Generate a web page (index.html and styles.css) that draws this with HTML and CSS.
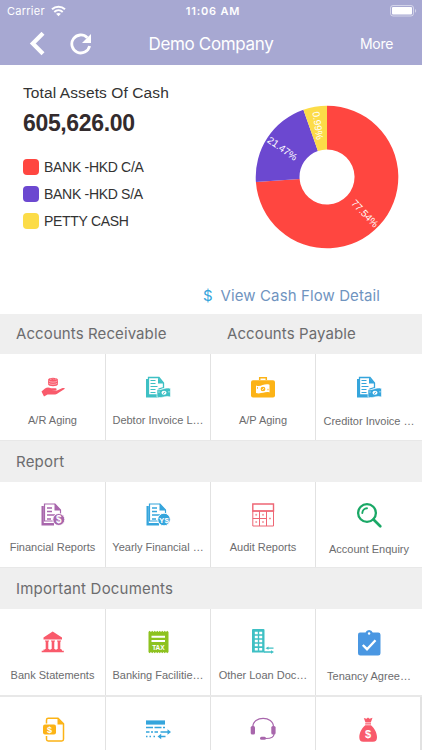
FILE: index.html
```html
<!DOCTYPE html>
<html lang="en">
  <head>
    <meta charset="UTF-8" />
    <meta name="viewport" content="width=device-width, initial-scale=1.0" />
    <title>Demo Company</title>
    <link rel="stylesheet" href="styles.css">
  </head>
  <body>
    <div class="header">
      <div class="status-bar">
        <div class="carrier">
          <span>Carrier</span>
          <svg width="15" height="12" viewBox="0 0 15 12" fill="none" stroke="#fff" stroke-width="2">
            <path d="M1 4.3c3.7-3.4 9.3-3.4 13 0M3.3 6.9c2.4-2.2 6-2.2 8.4 0" />
            <path d="M5.1 8.8c1.4-1.2 3.4-1.2 4.8 0L7.5 11.3z" fill="#fff" stroke="none" />
          </svg>
        </div>
        <span class="clock">11:06 AM</span>
        <svg class="battery" width="27" height="12" viewBox="0 0 27 12">
          <rect x=".5" y=".5" width="23" height="10.5" rx="2.5" fill="none" stroke="#fff" stroke-opacity=".5" />
          <rect x="2" y="2" width="20" height="7.5" rx="1" fill="#fff" />
          <path d="M25 4v3.8c1.6-.7 1.6-3.1 0-3.8z" fill="#fff" fill-opacity=".5" />
        </svg>
      </div>
      <div class="nav-bar">
        <div class="nav-left">
          <svg width="16" height="24" viewBox="0 0 16 24" fill="none" stroke="#fff" stroke-width="4.2">
            <path d="M14 1.300 3.800 11.500l10.200 10.200" />
          </svg>
          <svg width="22" height="22" viewBox="0 0 22 22">
            <path d="M17.3 4.7A9 9 0 1 0 19.6 13" fill="none" stroke="#fff" stroke-width="2.8" />
            <path d="M21 1v9h-9z" fill="#fff" />
          </svg>
        </div>
        <span class="nav-title">Demo Company</span>
        <span class="nav-more">More</span>
      </div>
    </div>

    <div class="summary">
      <div class="summary-top">
        <div class="assets">
          <div class="assets-title">Total Assets Of Cash</div>
          <div class="assets-total">605,626.00</div>
          <div class="legend"><span class="swatch red"></span>BANK -HKD C/A</div>
          <div class="legend"><span class="swatch purple"></span>BANK -HKD S/A</div>
          <div class="legend"><span class="swatch yellow"></span>PETTY CASH</div>
        </div>
        <svg class="chart" width="144" height="144" viewBox="255 105 144 144">
          <path d="M327 105.7A71.3 71.3 0 1 1 255.9 182L299.6 178.9A27.5 27.5 0 1 0 327 149.5z" fill="#ff4640" />
          <path d="M255.9 182A71.3 71.3 0 0 1 303.4 109.7L317.9 151A27.5 27.5 0 0 0 299.6 178.9z" fill="#6c48d0" />
          <path d="M303.4 109.7A71.3 71.3 0 0 1 327 105.7V149.5A27.5 27.5 0 0 0 317.9 151z" fill="#fcdc48" />
          <text class="chart-label" transform="translate(365 213.5) rotate(46)" y="3.5">77.54%</text>
          <text class="chart-label" transform="translate(282.5 148.5) rotate(35)" y="3.5">21.47%</text>
          <text class="chart-label" transform="translate(318 125.500) rotate(82)" y="3.5">0.99%</text>
        </svg>
      </div>
      <div class="cash-flow"><span class="dollar">$</span><span>View Cash Flow Detail</span></div>
    </div>

    <div class="section-title split"><span class="receivable">Accounts Receivable</span><span class="payable">Accounts Payable</span></div>
    <div class="tiles">
      <div class="tile">
        <svg viewBox="0 0 32 32" fill="#f95a6b">
          <path d="M11 9c0-3 10-3 10 0v4c0 3-10 3-10 0z" />
          <path d="M11.5 9.8c2 1.8 7 1.8 9 0M13 8.2h1.5M16 7.6l1 1M18 8h1.5M11.5 12.2c2 1.6 7 1.6 9 0" fill="none" stroke="#fff" stroke-width=".5" />
          <path d="M4.500 20.500 8 17.500c2-1.500 4-1.300 6-.3h4.500c1.500 0 1.500 2 0 2l-4 .3h5.500l5-2.300c1.500-.6 3.500-.2 2.500.7L20.500 22.500c-1 .8-2 1-3 1H10.500L7 25.500z" />
        </svg>
        <span>A/R Aging</span>
      </div>
      <div class="tile">
        <svg viewBox="0 0 32 32" fill="#3ec0c4">
          <path d="M6.500 6.500H17l4.500 5.500v4.500L17 18v6H6.500z" fill="#fff" stroke="#3ec0c4" stroke-width="1.300" />
          <path d="M16 6.500 22 12.500h-6zM4 8h2.500v16H17v2.500H4z" />
          <path d="M8.500 9.500h5M8.500 12.500h5M8.500 15.500h7M8.500 18.500h5M8.500 21.500h5" fill="none" stroke="#3ec0c4" stroke-width="1.200" />
          <path d="M15 18.500c4 1.500 8-3 13.500-1v8.500c-5-2-9 2-13.500 0z" stroke="#fff" stroke-width=".6" />
          <ellipse cx="22" cy="21.800" rx="2.500" ry="2" fill="#fff" />
          <path d="M17 20.300v1.500M27 20v1.500" stroke="#fff" stroke-width=".7" />
          <path d="m21.300 22.800 1.500-2" stroke="#3ec0c4" />
        </svg>
        <span>Debtor Invoice L…</span>
      </div>
      <div class="tile">
        <svg viewBox="0 0 32 32" fill="#fcb316">
          <path d="M12.700 9V6.800h6.600V9" fill="none" stroke="#fcb316" stroke-width="1.500" />
          <rect x="4" y="9.200" width="24" height="17.300" rx="2" />
          <path d="M9 14.500c5 2 8-2.500 13.500-.7v7.700c-4-1.500-8.500 2-13.500.500z" fill="#fff" />
          <ellipse cx="16" cy="18" rx="2.400" ry="2.200" />
          <path d="M10.500 16.200v1.500M21 17.800v1.500" stroke="#fcb316" />
          <path d="m15.300 19 1.500-2" stroke="#fff" stroke-width=".8" />
        </svg>
        <span>A/P Aging</span>
      </div>
      <div class="tile low">
        <svg viewBox="0 0 32 32" fill="#35a5dc">
          <path d="M6.500 6.500H17l4.500 5.500v4.500L17 18v6H6.500z" fill="#fff" stroke="#35a5dc" stroke-width="1.300" />
          <path d="M16 6.500 22 12.500h-6zM4 8h2.500v16H17v2.500H4z" />
          <path d="M8.500 9.500h5M8.500 12.500h5M8.500 15.500h7M8.500 18.500h5M8.500 21.500h5" fill="none" stroke="#35a5dc" stroke-width="1.200" />
          <path d="M15 18.500c4 1.500 8-3 13.500-1v8.500c-5-2-9 2-13.500 0z" stroke="#fff" stroke-width=".6" />
          <ellipse cx="22" cy="21.800" rx="2.500" ry="2" fill="#fff" />
          <path d="M17 20.300v1.500M27 20v1.500" stroke="#fff" stroke-width=".7" />
          <path d="m21.300 22.800 1.500-2" stroke="#35a5dc" />
        </svg>
        <span>Creditor Invoice …</span>
      </div>
    </div>

    <div class="section-title">Report</div>
    <div class="tiles">
      <div class="tile">
        <svg viewBox="0 0 32 32" fill="#a866ac">
          <path d="M7.500 5H18l5.500 6v11H7.500z" fill="#fff" stroke="#a866ac" stroke-width="1.200" />
          <path d="M17.500 4.500 24 11.500h-6.500zM4.500 7h2.300v17H17v2.500H4.500z" />
          <path d="M10 9h5M10 12.500h5M10 16h8M10 20h4" fill="none" stroke="#a866ac" stroke-width="1.300" />
          <circle cx="21.800" cy="20.500" r="6" stroke="#fff" stroke-width=".9" />
          <text class="icon-text" x="21.800" y="24" font-size="10">$</text>
        </svg>
        <span>Financial Reports</span>
      </div>
      <div class="tile">
        <svg viewBox="0 0 32 32" fill="#35a5dc">
          <path d="M7.500 5H18l5.500 6v11H7.500z" fill="#fff" stroke="#35a5dc" stroke-width="1.200" />
          <path d="M17.500 4.500 24 11.500h-6.500zM4.500 7h2.300v17H17v2.500H4.500z" />
          <path d="M10 9h5M10 12.500h5M10 16h8M10 20h4" fill="none" stroke="#35a5dc" stroke-width="1.300" />
          <circle cx="22" cy="20.500" r="6.300" stroke="#fff" stroke-width=".9" />
          <text class="icon-text" x="22" y="23.500" font-size="8">Y$</text>
        </svg>
        <span>Yearly Financial …</span>
      </div>
      <div class="tile">
        <svg viewBox="0 0 32 32" fill="none" stroke="#ee6674" stroke-width="1">
          <path d="M5.800 12h20.700v15H5.800zM12.500 12v15M19.500 12v15M5.800 19.500h13.700" />
          <path d="M5.800 5h20.700v7H5.800z" stroke-width="1.400" />
          <path d="M8.200 15.800h2M15 15.800h2M8.200 23h2M15 23h2M22 19.500h2M9.200 14.800v2M16 14.800v2M9.200 22v2M16 22v2M23 18.500v2" stroke-width=".6" />
        </svg>
        <span>Audit Reports</span>
      </div>
      <div class="tile low">
        <svg viewBox="0 0 32 32" fill="none" stroke="#1aa866">
          <circle cx="14" cy="14" r="8.900" stroke-width="2.300" />
          <path d="M9.300 14A5 5 0 0 1 14 9.300" stroke-width="1.900" stroke-linecap="round" />
          <path d="m20.500 20.500 6.800 6.800" stroke-width="2.700" stroke-linecap="round" />
        </svg>
        <span>Account Enquiry</span>
      </div>
    </div>

    <div class="section-title">Important Documents</div>
    <div class="tiles">
      <div class="tile">
        <svg viewBox="0 0 32 32" fill="#f95a6b">
          <path d="m15.700 5.500 9.300 6v2H6.500v-2zM8 14.500h4v1h-.7v7.500h.7v.5H8V23h.7v-7.500H8zM14 14.500h4v1h-.7v7.500h.7v.5h-4V23h.7v-7.500H14zM20 14.500h4v1h-.7v7.500h.7v.5h-4V23h.7v-7.500H20zM6.500 23.500h18.500v1.300h1.800v1.500H4.700v-1.500h1.800z" />
        </svg>
        <span>Bank Statements</span>
      </div>
      <div class="tile">
        <svg viewBox="0 0 32 32" fill="#8dc21f">
          <path d="m6.500 6 1-1.200L9 6l1.200-1.200L11.500 6l1.300-1.200L14 6l1.300-1.200L16.500 6l1.300-1.200L19 6l1.300-1.200L21.500 6l1.300-1.200L24 6l1.200-1.200L26.500 6v20l-1.300 1.200L24 26l-1.200 1.200L21.500 26l-1.200 1.200L19 26l-1.200 1.200L16.500 26l-1.200 1.200L14 26l-1.200 1.200L11.500 26l-1.300 1.200L9 26l-1.500 1.200-1-1.200z" />
          <path d="M9.500 10.700H23M9.500 15H23" stroke="#fff" stroke-width="1.900" />
          <text class="icon-text" x="16.400" y="24" font-size="6.500">TAX</text>
        </svg>
        <span>Banking Facilitie…</span>
      </div>
      <div class="tile">
        <svg viewBox="0 0 32 32" fill="#3ec0c4">
          <path d="M6 3h10.500q1 0 1 1v22.500H5V4q0-1 1-1z" />
          <path d="M7.800 7h3M12.200 7h3M7.800 11h3M12.200 11h3M7.800 15h3M12.200 15h3M7.800 19h3M12.200 19h3M7.800 23.200h3M12.200 23.200h3" stroke="#fff" stroke-width="2.600" />
          <path d="M17 25.200h7v-1l3 1.800-3 1.800v-1h-7zM26.500 22.800h-5v1l-3-1.600 3-1.600v1h5z" />
        </svg>
        <span>Other Loan Doc…</span>
      </div>
      <div class="tile low">
        <svg viewBox="0 0 32 32" fill="#4a97e2">
          <path d="M7 6.500h5.500a3.800 3.800 0 0 1 7.200 0h5.500q2.300 0 2.300 2.300v18.500q0 2.300-2.300 2.300H7.300Q5 29.600 5 27.300V8.800q0-2.300 2-2.300z" />
          <circle cx="16.100" cy="7.500" r="1.200" fill="#fff" />
          <path d="m9.800 19 4.200 4.200 8.500-9" fill="none" stroke="#fff" stroke-width="2.400" />
        </svg>
        <span>Tenancy Agree…</span>
      </div>
    </div>

    <div class="tiles last">
      <div class="tile">
        <svg viewBox="0 0 32 32" fill="#fcb316">
          <path d="M9.500 9.500V6q0-1.700 1.700-1.700H21l5.500 5.500v15.500q0 1.700-1.700 1.700H11.200q-1.700 0-1.700-1.700V22" fill="none" stroke="#fcb316" stroke-width="1.500" />
          <path d="M20.500 4 27 10.500h-6.500z" />
          <rect x="6" y="10.500" width="13" height="10" rx="2" />
          <text class="icon-text" x="12.500" y="18.800" font-size="9">$</text>
        </svg>
      </div>
      <div class="tile">
        <svg viewBox="0 0 32 32" fill="none" stroke="#35a5dc" stroke-width="1.400">
          <path d="M4 8.500h19" stroke-width="4.200" />
          <path d="M4 13.500h7M12.500 13.500h7M21 13.500h2M4 18h3.500M9 18h2M12.500 18h3.500M18.500 18h8M4 22.500h1.500M7.500 22.500h1.500M11.500 22.500h1.500M18 22.500h5.500" />
          <path d="M25.500 15.300 29 18l-3.500 2.700zM19.200 19.800 15.500 22.500l3.700 2.700z" fill="#35a5dc" stroke="none" />
        </svg>
      </div>
      <div class="tile">
        <svg viewBox="0 0 32 32" fill="#a866ac">
          <path d="M5.800 13C5.800 1.500 26.500 1.500 26.500 13M27 20c0 3-3 4.500-8 4.500" fill="none" stroke="#a866ac" stroke-width="1.200" />
          <rect x="3.700" y="12" width="4.300" height="8.500" rx="1.600" />
          <rect x="24.300" y="12" width="4.300" height="8.500" rx="1.600" />
          <rect x="13" y="22.800" width="6" height="3" rx="1.500" />
        </svg>
      </div>
      <div class="tile">
        <svg viewBox="0 0 32 32" fill="#f95a6b">
          <path d="m11.800 4 2.700.7L16 3.500l1.500 1.200 3-.9-1.700 4.700h-5.300zM13.200 9.300h5.800v1.200h-5.800zM13.200 11.300H19c3.500 3 6 7.500 6 12q0 4.500-4 4.500h-9.700q-4 0-4-4.500c0-4.500 2.400-9 5.900-12z" />
          <text class="icon-text" x="16.100" y="23.500" font-size="11">$</text>
        </svg>
      </div>
    </div>
  </body>
</html>
```
FILE: styles.css
```css
* {
  box-sizing: border-box;
}

body {
  margin: 0;
  width: 422px;
  height: 750px;
  overflow: hidden;
  background-color: #fff;
  font-family: "Liberation Sans", Arial, sans-serif;
  color: #333;
}

svg {
  display: block;
}

.header {
  height: 65px;
  background-color: #a7a8d2;
  color: #fff;
  font-family: Inter, sans-serif;
}

.status-bar {
  display: grid;
  grid-template-columns: 1fr auto 1fr;
  align-items: center;
  height: 22px;
  padding: 0 5px 0 7px;
  font-size: 11px;
}

.carrier {
  display: flex;
  align-items: center;
  gap: 6px;
  letter-spacing: 0.25px;
}

.clock {
  font-weight: 600;
  letter-spacing: 0.8px;
  padding-left: 2px;
}

.battery {
  justify-self: end;
}

.nav-bar {
  display: grid;
  grid-template-columns: 1fr auto 1fr;
  align-items: center;
  height: 43px;
  padding: 0 29px;
}

.nav-left {
  display: flex;
  align-items: center;
  gap: 25px;
}

.nav-title {
  font-size: 17px;
  letter-spacing: -0.35px;
}

.nav-more {
  justify-self: end;
  font-size: 14px;
  letter-spacing: -0.3px;
}

.summary {
  height: 249px;
}

.summary-top {
  display: flex;
  justify-content: space-between;
  height: 211px;
  padding: 0 23px;
}

.assets {
  padding-top: 18px;
}

.assets-title {
  font-size: 15.5px;
  line-height: 20px;
  letter-spacing: 0.1px;
}

.assets-total {
  margin: 7px 0 17px;
  font-size: 23px;
  line-height: 26px;
  letter-spacing: -0.35px;
  font-weight: bold;
  color: #332b2d;
}

.legend {
  display: flex;
  align-items: center;
  gap: 5px;
  height: 27px;
  font-size: 14px;
  letter-spacing: -0.3px;
}

.swatch {
  width: 16px;
  height: 16px;
  border-radius: 4px;
}

.red {
  background-color: #ff4640;
}

.purple {
  background-color: #6c48d0;
}

.yellow {
  background-color: #fcdc48;
}

.chart {
  margin-top: 40px;
}

.chart-label {
  fill: #fff;
  font-size: 10px;
  text-anchor: middle;
}

.cash-flow {
  display: flex;
  justify-content: flex-end;
  gap: 8px;
  padding: 10px 42px 0 0;
  font-family: Inter, sans-serif;
  font-size: 15px;
  line-height: 20px;
  letter-spacing: 0.1px;
  color: #7094bf;
}

.dollar {
  color: #35a5dc;
}

.section-title {
  height: 41px;
  padding-left: 16px;
  background-color: #efefef;
  color: #6c6c6e;
  font-family: Inter, sans-serif;
  font-size: 15px;
  line-height: 41px;
  letter-spacing: 0.2px;
}

.split {
  display: grid;
  grid-template-columns: 211px 1fr;
  height: 40px;
  line-height: 40px;
  letter-spacing: 0.1px;
}

.tiles {
  display: grid;
  grid-template-columns: 106px 105px 105px 106px;
  height: 86.5px;
  border-bottom: 1px solid #e8e8e8;
}

.tile {
  display: flex;
  flex-direction: column;
  align-items: center;
  padding-top: 17px;
  border-right: 1px solid #e2e2e2;
}

.tile:last-child {
  border-right: none;
}

.tile svg {
  width: 32px;
  height: 32px;
}

.tile span {
  margin-top: 8.6px;
  font-size: 11px;
  line-height: 16px;
  white-space: nowrap;
  color: #6c6c6e;
}

.tile.low span {
  margin-top: 10px;
}

.last {
  border-top: 1px solid #e8e8e8;
}

.last .tile:last-child {
  border-right: 2px solid #e2e2e2;
}

.icon-text {
  fill: #fff;
  font-weight: bold;
  text-anchor: middle;
}
```
